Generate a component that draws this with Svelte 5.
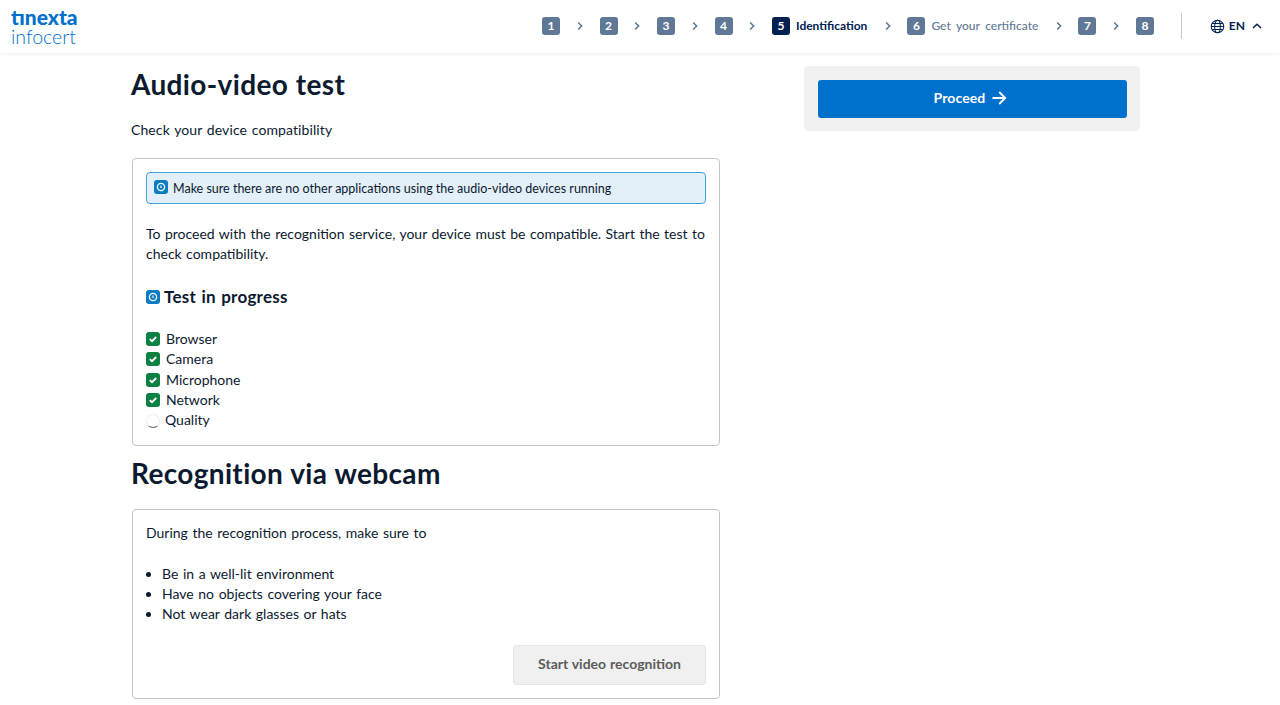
<script>
	const steps = [
		{ n: 1 },
		{ n: 2 },
		{ n: 3 },
		{ n: 4 },
		{ n: 5, label: 'Identification', active: true },
		{ n: 6, label: 'Get your certificate' },
		{ n: 7 },
		{ n: 8 }
	];
	const checks = ['Browser', 'Camera', 'Microphone', 'Network'];
	const tips = ['Be in a well-lit environment', 'Have no objects covering your face', 'Not wear dark glasses or hats'];
</script>

{#snippet infoIcon(cls)}
	<svg class={cls} viewBox="0 0 14 14" aria-hidden="true">
		<rect width="14" height="14" rx="3" fill="#0a7cc4" />
		<circle cx="7" cy="7" r="3.6" fill="none" stroke="#fff" stroke-width="1.3" />
		<path d="M7 5.400v2.600" stroke="#fff" stroke-width="1.1" />
	</svg>
{/snippet}

<header class="topbar">
	<div class="logo">
		<span class="logo-top">tınexta</span>
		<span class="logo-bottom">infocert</span>
	</div>
	<nav class="steps">
		{#each steps as step, i}
			<div class="step" class:active={step.active}>
				<span class="num">{step.n}</span>
				{#if step.label}<span class="label">{step.label}</span>{/if}
			</div>
			{#if i < steps.length - 1}
				<svg class="chev" viewBox="0 0 8 10" aria-hidden="true"><path d="M2.200 1.500 5.600 5 2.200 8.500" /></svg>
			{/if}
		{/each}
	</nav>
	<div class="lang">
		<svg class="globe" viewBox="0 0 16 16" aria-hidden="true">
			<circle cx="8" cy="8" r="6.7" />
			<ellipse cx="8" cy="8" rx="3" ry="6.7" />
			<path d="M1.300 8h13.400M2.200 4.700h11.600M2.200 11.300h11.600" />
		</svg>
		<span>EN</span>
		<svg class="caret" viewBox="0 0 10 6" aria-hidden="true"><path d="M1 5 5 1.300 9 5" /></svg>
	</div>
</header>

<main class="page">
	<section class="left">
		<h1>Audio-video test</h1>
		<p class="sub">Check your device compatibility</p>

		<div class="card test-card">
			<div class="notice">
				{@render infoIcon('notice-icon')}
				<span>Make sure there are no other applications using the audio-video devices running</span>
			</div>
			<p class="intro">To proceed with the recognition service, your device must be compatible. Start the test to check compatibility.</p>
			<h2>{@render infoIcon('h2-icon')}Test in progress</h2>
			<ul class="checks">
				{#each checks as c}
					<li>
						<svg class="tick" viewBox="0 0 14 14" aria-hidden="true">
							<rect width="14" height="14" rx="3" fill="#0b8043" />
							<path d="M3.800 7.200 6 9.200 10.200 5" fill="none" stroke="#fff" stroke-width="1.800" />
						</svg>
						{c}
					</li>
				{/each}
				<li class="pending"><span class="spinner"></span>Quality</li>
			</ul>
		</div>

		<h1 class="second">Recognition via webcam</h1>

		<div class="card webcam-card">
			<p>During the recognition process, make sure to</p>
			<ul class="tips">
				{#each tips as t}<li>{t}</li>{/each}
			</ul>
			<div class="actions">
				<button class="start" disabled>Start video recognition</button>
			</div>
		</div>
	</section>

	<aside class="right">
		<div class="panel">
			<button class="proceed">
				Proceed
				<svg viewBox="0 0 16 16" aria-hidden="true"><path d="M1.500 8h12.500M8.200 2l6 6-6 6" /></svg>
			</button>
		</div>
	</aside>
</main>

<style>
	:global(body) {
		margin: 0;
		background: #fff;
		color: #0c1a30;
		font-family: Lato, 'Open Sans', sans-serif;
		font-size: 14px;
		line-height: 20.400px;
		word-spacing: 1px;
	}

	.topbar {
		height: 53px;
		display: flex;
		align-items: center;
		padding: 0 0 1px 11px;
		box-shadow: 0 1px 4px rgba(0, 0, 0, 0.08);
		box-sizing: border-box;
	}

	.logo {
		flex: none;
		display: flex;
		flex-direction: column;
		color: #0070cd;
		line-height: 20px;
		width: 531px;
		margin-top: 2px;
	}
	.logo-top {
		font-size: 21px;
		font-weight: 900;
	}
	.logo-bottom {
		font-size: 19.500px;
		font-weight: 300;
	}

	.steps {
		flex: none;
		display: flex;
		align-items: center;
		gap: 15.750px;
	}
	.step {
		display: flex;
		align-items: center;
		gap: 6px;
		font-size: 12px;
		font-weight: 500;
		color: #5f7896;
		word-spacing: 2.500px;
	}
	.step.active {
		color: #00214f;
		font-weight: 700;
	}
	.label {
		margin-right: 0.500px;
		white-space: nowrap;
	}
	.num {
		width: 18px;
		height: 18px;
		border-radius: 3px;
		background: #5f7896;
		color: #fff;
		font-weight: 700;
		font-size: 12px;
		line-height: 18px;
		text-align: center;
	}
	.active .num {
		background: #00214f;
	}
	.chev {
		width: 8px;
		height: 10px;
		fill: none;
		stroke: #5f7896;
		stroke-width: 1.600;
	}

	.lang {
		flex: none;
		margin-left: 27px;
		padding-left: 28px;
		height: 26px;
		border-left: 1px solid #c4c8cc;
		display: flex;
		align-items: center;
		gap: 4px;
		color: #00214f;
		font-size: 12px;
		font-weight: 700;
	}
	.globe {
		width: 15px;
		height: 15px;
		fill: none;
		stroke: #00214f;
		stroke-width: 1.100;
	}
	.caret {
		width: 10px;
		height: 6px;
		margin-left: 3px;
		fill: none;
		stroke: #00214f;
		stroke-width: 1.500;
	}

	.page {
		display: grid;
		grid-template-columns: 589px 336px;
		column-gap: 84px;
		padding: 13px 0 0 131px;
	}

	h1 {
		margin: 0;
		font-size: 28px;
		line-height: 36px;
		font-weight: 700;
		letter-spacing: 0.350px;
		word-spacing: 0.500px;
		color: #0c1a30;
	}
	.sub {
		margin: 18px 0 18px;
		letter-spacing: 0.100px;
	}
	.second {
		margin: 9px 0 18px;
	}

	.card {
		border: 1px solid #c4c4c4;
		border-radius: 4px;
		margin-left: 1px;
		padding: 13px;
		box-sizing: border-box;
	}
	.test-card {
		height: 288px;
	}
	.webcam-card {
		height: 190px;
	}
	.card p {
		margin: 0;
	}

	.notice {
		display: flex;
		align-items: center;
		gap: 5px;
		height: 32px;
		padding: 1px 7px 0;
		box-sizing: border-box;
		background: #e3f0f9;
		border: 1px solid #3aa3dd;
		border-radius: 4px;
		font-size: 12.500px;
		word-spacing: 0;
	}
	.notice :global(.notice-icon) {
		width: 14px;
		height: 14px;
		margin-top: -3px;
	}

	.card .intro {
		margin-top: 19.400px;
		word-spacing: 0.850px;
	}

	h2 {
		margin: 21.600px 0 20.700px;
		display: flex;
		align-items: center;
		gap: 4px;
		font-size: 17px;
		line-height: 22px;
		font-weight: 700;
		letter-spacing: 0.250px;
	}
	h2 :global(.h2-icon) {
		width: 14px;
		height: 14px;
	}

	.checks {
		list-style: none;
		margin: 0;
		padding: 0;
	}
	.checks li {
		display: flex;
		align-items: center;
		gap: 6px;
		height: 20.400px;
	}
	.tick {
		width: 14px;
		height: 14px;
	}
	.checks .pending {
		gap: 5px;
	}
	.spinner {
		width: 14px;
		height: 14px;
		box-sizing: border-box;
		border-radius: 50%;
		border: 1px solid #eceef0;
		border-bottom-color: #5a6472;
	}

	.tips {
		margin: 19.700px 0 0;
		padding: 0 0 0 16px;
	}

	.actions {
		display: flex;
		justify-content: flex-end;
		margin-top: 20.300px;
	}
	.start {
		width: 193px;
		height: 40px;
		padding: 0 0 3px;
		background: #f0f0f0;
		border: 1px solid #e6e6e6;
		border-radius: 3px;
		color: #5c5c5c;
		font: 700 14px Lato, sans-serif;
		word-spacing: 0.500px;
	}

	.panel {
		background: #f1f1f1;
		border-radius: 4px;
		padding: 14px 13px 13px 14px;
		height: 65px;
		box-sizing: border-box;
	}
	.proceed {
		width: 100%;
		height: 38px;
		display: flex;
		align-items: center;
		justify-content: center;
		gap: 6px;
		padding: 0 0 3px;
		background: #0070cd;
		border: 0;
		border-radius: 3px;
		color: #fff;
		font: 700 14px Lato, sans-serif;
		letter-spacing: 0.100px;
	}
	.proceed svg {
		width: 16px;
		height: 16px;
		margin-right: 4px;
		fill: none;
		stroke: #fff;
		stroke-width: 1.800;
	}
</style>
